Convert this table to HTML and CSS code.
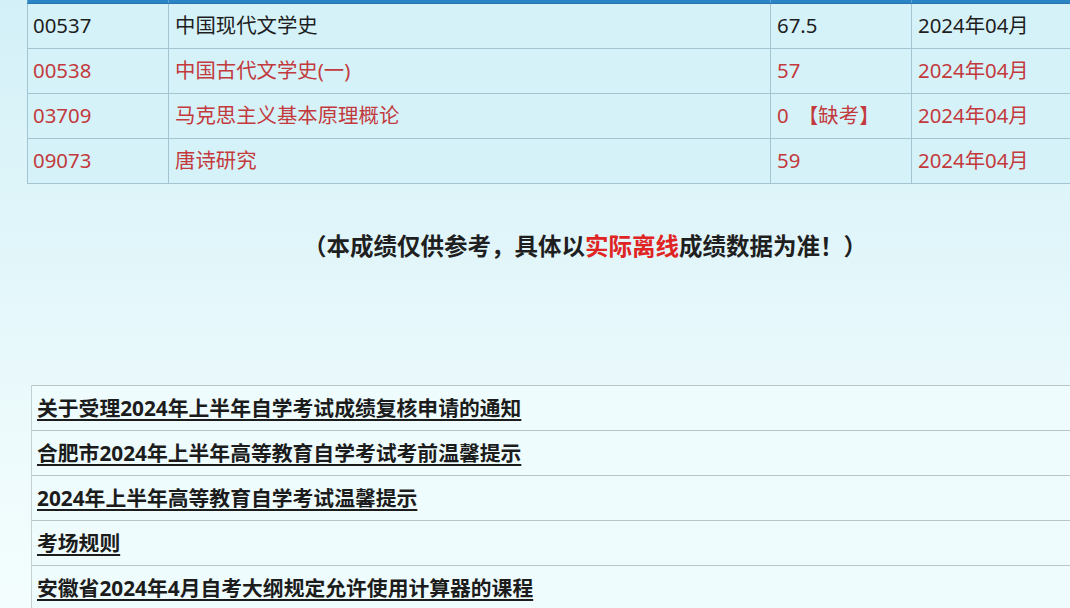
FILE: index.html
```html
<!DOCTYPE html>
<html lang="zh-CN">
<head>
<meta charset="utf-8">
<title>成绩查询</title>
<link rel="stylesheet" href="styles.css">
</head>
<body>
<div class="page">
  <table class="scores">
    <colgroup>
      <col class="c-code"><col class="c-name"><col class="c-score"><col class="c-date">
    </colgroup>
    <thead>
      <tr class="head"><th></th><th></th><th></th><th></th></tr>
    </thead>
    <tbody>
      <tr><td>00537</td><td>中国现代文学史</td><td>67.5</td><td>2024年04月</td></tr>
      <tr class="fail"><td>00538</td><td>中国古代文学史(一)</td><td>57</td><td>2024年04月</td></tr>
      <tr class="fail"><td>03709</td><td>马克思主义基本原理概论</td><td>0 <span class="absent">【缺考】</span></td><td>2024年04月</td></tr>
      <tr class="fail"><td>09073</td><td>唐诗研究</td><td>59</td><td>2024年04月</td></tr>
    </tbody>
  </table>

  <p class="note">（本成绩仅供参考，具体以<span class="hl">实际离线</span>成绩数据为准！）</p>

  <ul class="links">
    <li><a href="#">关于受理2024年上半年自学考试成绩复核申请的通知</a></li>
    <li><a href="#">合肥市2024年上半年高等教育自学考试考前温馨提示</a></li>
    <li><a href="#">2024年上半年高等教育自学考试温馨提示</a></li>
    <li><a href="#">考场规则</a></li>
    <li><a href="#">安徽省2024年4月自考大纲规定允许使用计算器的课程</a></li>
  </ul>
</div>
</body>
</html>
```

FILE: styles.css
```css
html, body {
  margin: 0;
  padding: 0;
}
body {
  width: 1070px;
  height: 608px;
  overflow: hidden;
  background: linear-gradient(180deg, #d3f0f8 0px, #e2f6fa 260px, #eefbfc 450px, #f3fdfd 608px);
  font-family: "Noto Sans", "Noto Sans CJK SC", sans-serif;
  color: #1e1e1e;
}
.page {
  width: 1116px;
  margin-left: 27px;
}
.scores {
  width: 1116px;
  border-collapse: collapse;
  table-layout: fixed;
  font-size: 20.4px;
  background: #d6f2f9;
}
.c-code { width: 141px; }
.c-name { width: 602px; }
.c-score { width: 141px; }
.c-date { width: 232px; }
.scores .head th {
  height: 3px;
  padding: 0;
  background: #2b84c3;
  border-left: 1px solid #5aa2d4;
  border-bottom: 1px solid #2876b0;
}
.scores td {
  height: 43px;
  padding: 0 0 1px 6px;
  border: 1px solid #a3c5d1;
  white-space: nowrap;
  vertical-align: middle;
  line-height: 1;
}
.scores tbody td:first-child { padding-left: 5px; }
.fail td { color: #c23a3d; }
.absent { margin-left: 4px; }

.note {
  margin: 46px 0 0;
  height: 32px;
  text-align: center;
  font-size: 23.5px;
  font-weight: bold;
  color: #1f1f1f;
  line-height: 32px;
}
.hl { color: #e02424; }

.links {
  list-style: none;
  margin: 123px 0 0 4px;
  padding: 0;
  width: 1112px;
  background: #effcfd;
  border-left: 1px solid #c3d0d4;
}
.links li {
  height: 44px;
  border-top: 1px solid #b8c6ca;
  padding-left: 5px;
  display: flex;
  align-items: center;
}
.links a {
  font-size: 20.8px;
  font-weight: bold;
  color: #1c1c1c;
  text-decoration: underline;
  text-underline-offset: 3px;
  text-decoration-thickness: 2px;
  line-height: 1;
}
```
